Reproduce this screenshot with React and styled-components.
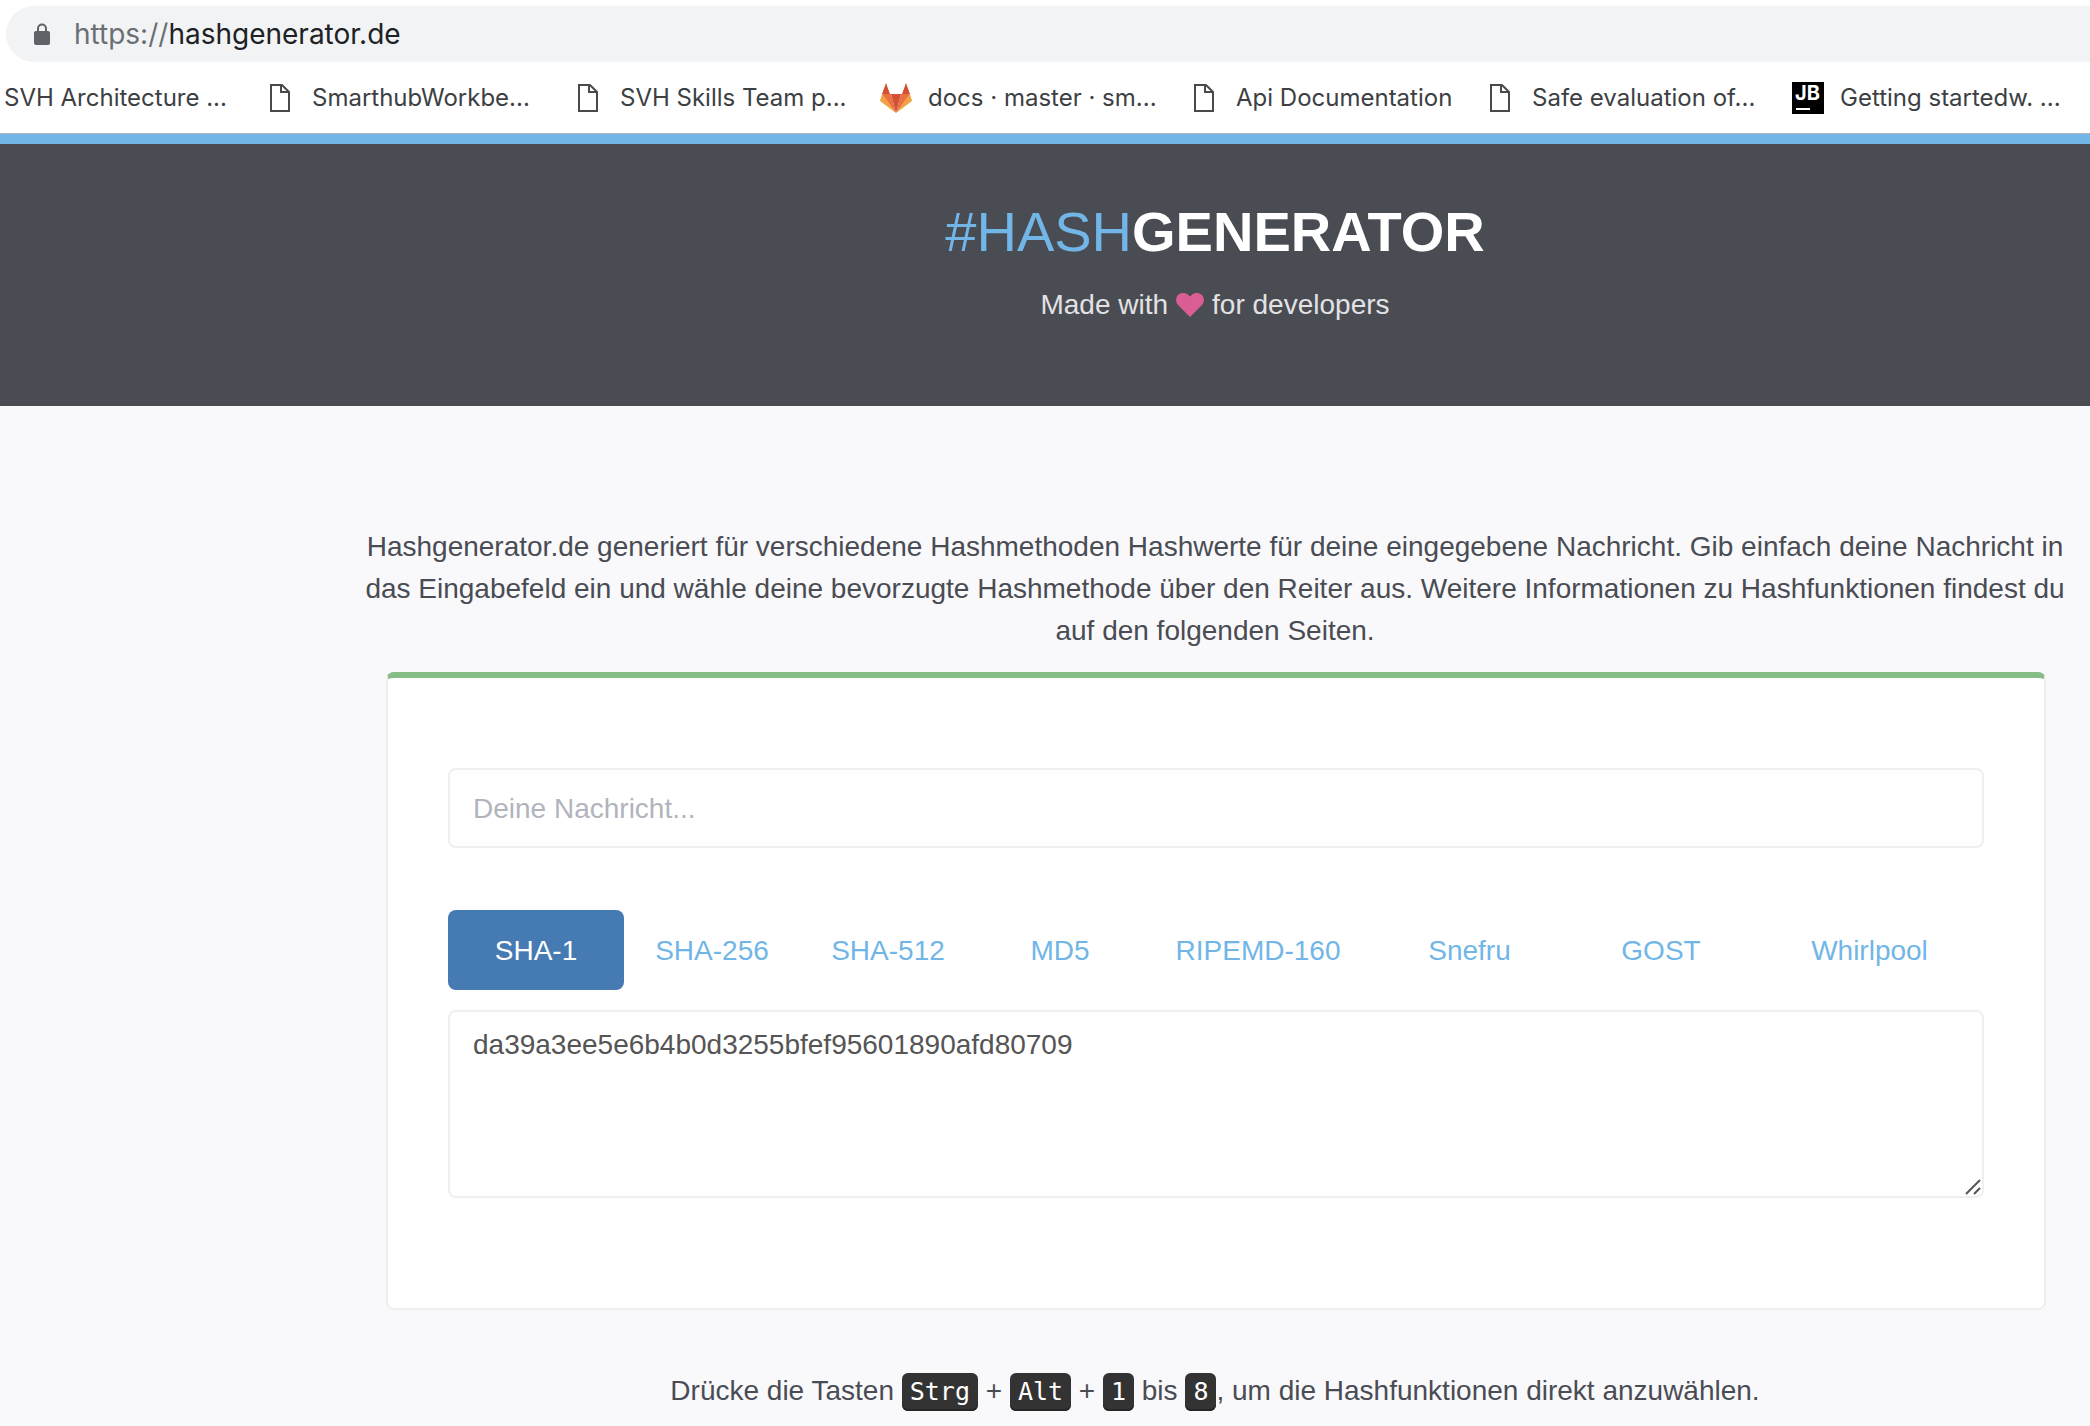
import React, { useState } from "react";
import styled, { createGlobalStyle } from "styled-components";

const GlobalStyle = createGlobalStyle`
  *, *::before, *::after { box-sizing: border-box; }
  body {
    margin: 0;
    background: #f9f9fb;
    color: #4a4c54;
    font-family: "Liberation Sans", Arial, sans-serif;
    font-size: 28px;
    line-height: 42px;
  }
`;

const Window = styled.div`
  height: 100vh;
  overflow: hidden;
`;

const Chrome = styled.div`
  display: flex;
  flex-direction: column;
  padding-top: 6px;
  background: #fff;
  border-bottom: 1px solid #b5b5b5;
  font-family: Inter, "Noto Sans", sans-serif;
`;

const AddressBar = styled.div`
  display: flex;
  align-items: center;
  gap: 24px;
  height: 56px;
  margin-left: 6px;
  padding-left: 28px;
  background: #f1f3f4;
  border-radius: 28px 0 0 28px;
`;

const Url = styled.span`
  font-size: 28px;
  line-height: 36px;
  color: #202124;
`;

const Scheme = styled.span`
  color: #6b6f74;
`;

const Bookmarks = styled.nav`
  display: flex;
  align-items: center;
  padding: 20px 0 19px;
  overflow: hidden;
`;

const Bookmark = styled.a`
  display: flex;
  align-items: center;
  gap: 16px;
  flex: 0 0 ${(p) => p.$width}px;
  padding-left: ${(p) => (p.$clipped ? 4 : 0)}px;
  color: #3c4043;
  font-size: 24px;
  line-height: 32px;
  white-space: nowrap;
  text-decoration: none;
`;

const Hero = styled.header`
  padding: 54px 0 80px 340px;
  border-top: 10px solid #71b6e7;
  background: #4a4c54;
  text-align: center;
`;

const Title = styled.h1`
  margin: 0 0 18px;
  color: #fff;
  font-size: 56px;
  font-weight: 700;
  line-height: 68px;
`;

const TitleAccent = styled.span`
  color: #71b6e7;
  font-weight: 400;
`;

const Tagline = styled.p`
  display: flex;
  justify-content: center;
  align-items: center;
  gap: 8px;
  margin: 0;
  color: #e2e2e4;
`;

const Main = styled.main`
  display: flex;
  flex-direction: column;
  align-items: center;
  padding: 120px 20px 0 360px;
`;

const Intro = styled.p`
  max-width: 1710px;
  margin: 0 0 20px;
  text-align: center;
`;

const Card = styled.form`
  align-self: stretch;
  margin: 0 24px 0 26px;
  padding: 90px 60px 110px;
  background: #fff;
  border: 2px solid #efeff0;
  border-top: 6px solid #86bd86;
  border-radius: 8px;
`;

const Message = styled.input`
  display: block;
  width: 100%;
  height: 80px;
  padding: 2px 23px 0;
  border: 2px solid #efeff0;
  border-radius: 8px;
  background: #fff;
  color: #555;
  font: inherit;
  outline: none;

  &::placeholder {
    color: #b1b4bd;
    opacity: 1;
  }
`;

const Tabs = styled.div`
  display: grid;
  grid-template-columns: 176fr 176fr 176fr 168fr 228fr 195fr 188fr 229fr;
  margin: 62px 0 20px;
`;

const Tab = styled.button`
  height: 80px;
  padding: 2px 0 0;
  border: 0;
  border-radius: 8px;
  background: ${(p) => (p.$active ? "#467ab3" : "transparent")};
  color: ${(p) => (p.$active ? "#fff" : "#71b6e7")};
  font: inherit;
  cursor: pointer;
`;

const ResultBox = styled.div`
  position: relative;
`;

const Result = styled.textarea`
  display: block;
  width: 100%;
  height: 188px;
  padding: 12px 23px;
  border: 2px solid #efeff0;
  border-radius: 8px;
  background: #fff;
  color: #555;
  font: inherit;
  resize: none;
  outline: none;
`;

const Grip = styled.svg`
  position: absolute;
  right: 3px;
  bottom: 3px;
`;

const Hint = styled.p`
  margin: 60px 0 0;
  text-align: center;
`;

const Key = styled.kbd`
  display: inline-block;
  padding: 0 8px;
  border-radius: 6px;
  background: #333;
  box-shadow: inset 0 -2px 0 #262626;
  color: #fff;
  font-family: "DejaVu Sans Mono", monospace;
  font-size: 25px;
  line-height: 38px;
`;

const LockIcon = () => (
  <svg width="16" height="22" viewBox="0 0 16 22" aria-hidden="true">
    <path d="M4 9V5.5a4 4 0 0 1 8 0V9" fill="none" stroke="#5f6368" strokeWidth="2" />
    <rect y="8" width="16" height="14" rx="2" fill="#5f6368" />
  </svg>
);

const FileIcon = () => (
  <svg width="32" height="32" viewBox="0 0 32 32" aria-hidden="true">
    <path d="M7 3h11l7 7v19H7z M17 3v7h8" fill="none" stroke="#4a4a4a" strokeWidth="2" />
  </svg>
);

const GitlabIcon = () => (
  <svg width="32" height="32" viewBox="0 0 32 32" aria-hidden="true">
    <path d="M16 31L0 19l2-7z" fill="#f0a33f" />
    <path d="M16 31L32 19l-2-7z" fill="#f0a33f" />
    <path d="M16 31L2 12h9z" fill="#ea7040" />
    <path d="M16 31L30 12h-9z" fill="#ea7040" />
    <path d="M16 31L11 12h10z" fill="#d45035" />
    <path d="M2 12L6 1l4 11z" fill="#d45035" />
    <path d="M30 12L26 1l-4 11z" fill="#d45035" />
  </svg>
);

const JetBrainsIcon = () => (
  <svg width="32" height="32" viewBox="0 0 32 32" aria-hidden="true">
    <rect width="32" height="32" fill="#000" />
    <text x="3" y="18" fill="#fff" fontFamily="Inter, sans-serif" fontWeight="700" fontSize="20">JB</text>
    <rect x="4" y="26" width="14" height="2" fill="#fff" />
  </svg>
);

const HeartIcon = () => (
  <svg width="28" height="24" viewBox="0 0 28 24" aria-hidden="true">
    <path d="M14 24L2.5 12.6C-.8 9 -.4 4.2 2.4 1.8 5.6-.9 10-.5 12.6 2.2L14 3.6l1.4-1.4C18-.5 22.4-.9 25.6 1.8c2.8 2.4 3.2 7.2-.1 10.8z" fill="#da5e93" />
  </svg>
);

const bookmarks = [
  { label: "SVH Architecture ...", width: 264, clipped: true },
  { label: "SmarthubWorkbe...", width: 308, Icon: FileIcon },
  { label: "SVH Skills Team p...", width: 308, Icon: FileIcon },
  { label: "docs · master · sm...", width: 308, Icon: GitlabIcon },
  { label: "Api Documentation", width: 296, Icon: FileIcon },
  { label: "Safe evaluation of...", width: 308, Icon: FileIcon },
  { label: "Getting startedw. ...", width: 308, Icon: JetBrainsIcon },
];

const methods = ["SHA-1", "SHA-256", "SHA-512", "MD5", "RIPEMD-160", "Snefru", "GOST", "Whirlpool"];

export default function App() {
  const [active, setActive] = useState("SHA-1");

  return (
    <Window>
      <GlobalStyle />
      <Chrome>
        <AddressBar>
          <LockIcon />
          <Url>
            <Scheme>https://</Scheme>hashgenerator.de
          </Url>
        </AddressBar>
        <Bookmarks>
          {bookmarks.map(({ label, width, clipped, Icon }) => (
            <Bookmark key={label} href="#" $width={width} $clipped={clipped}>
              {Icon && <Icon />}
              {label}
            </Bookmark>
          ))}
        </Bookmarks>
      </Chrome>
      <Hero>
        <Title>
          <TitleAccent>#HASH</TitleAccent>GENERATOR
        </Title>
        <Tagline>
          <span>Made with</span>
          <HeartIcon />
          <span>for developers</span>
        </Tagline>
      </Hero>
      <Main>
        <Intro>
          Hashgenerator.de generiert für verschiedene Hashmethoden Hashwerte für deine eingegebene
          Nachricht. Gib einfach deine Nachricht in das Eingabefeld ein und wähle deine bevorzugte
          Hashmethode über den Reiter aus. Weitere Informationen zu Hashfunktionen findest du auf
          den folgenden Seiten.
        </Intro>
        <Card onSubmit={(e) => e.preventDefault()}>
          <Message type="text" aria-label="Deine Nachricht" placeholder="Deine Nachricht..." />
          <Tabs role="tablist">
            {methods.map((name) => (
              <Tab
                key={name}
                type="button"
                role="tab"
                aria-selected={name === active}
                $active={name === active}
                onClick={() => setActive(name)}
              >
                {name}
              </Tab>
            ))}
          </Tabs>
          <ResultBox>
            <Result aria-label="Hashwert" readOnly value="da39a3ee5e6b4b0d3255bfef95601890afd80709" />
            <Grip width="16" height="16" viewBox="0 0 16 16" aria-hidden="true">
              <path d="M1 15L15 1M9 15l6-6" stroke="#555" strokeWidth="2" />
            </Grip>
          </ResultBox>
        </Card>
        <Hint>
          Drücke die Tasten <Key>Strg</Key> + <Key>Alt</Key> + <Key>1</Key> bis <Key>8</Key>, um die
          Hashfunktionen direkt anzuwählen.
        </Hint>
      </Main>
    </Window>
  );
}
